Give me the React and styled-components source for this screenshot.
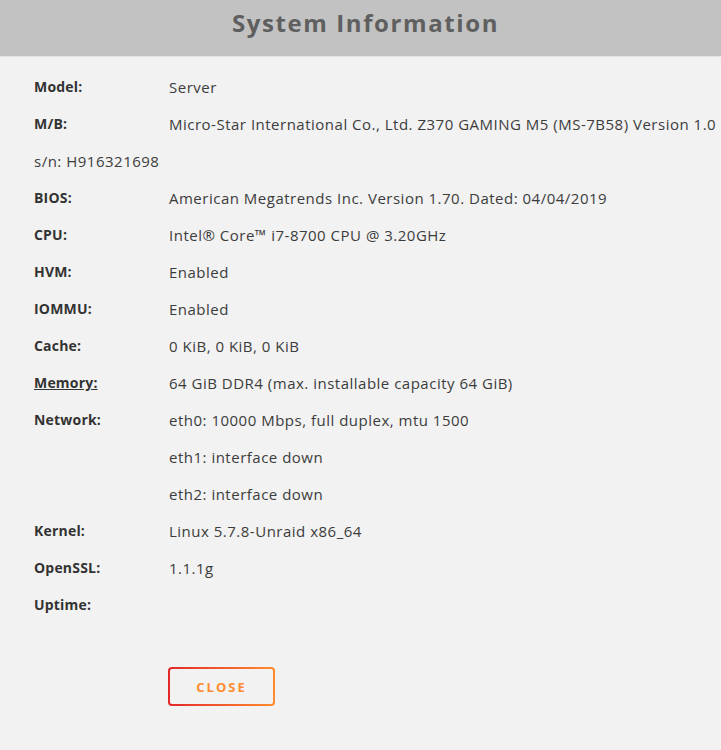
import styled, { createGlobalStyle } from "styled-components";

const GlobalStyle = createGlobalStyle`
  body {
    margin: 0;
    background: #f2f2f2;
    font-family: "Open Sans", "Liberation Sans", sans-serif;
  }
`;

const Page = styled.div`
  width: 721px;
  min-height: 750px;
  background: #f2f2f2;
  overflow: hidden;
`;

const Header = styled.div`
  height: 57px;
  box-sizing: border-box;
  background: #c2c2c2;
  border-bottom: 1px solid #e4e4e4;
  display: flex;
  align-items: center;
  justify-content: center;
  padding: 0 0 12px 10px;
`;

const Title = styled.h1`
  margin: 0;
  font-size: 24px;
  font-weight: 700;
  letter-spacing: 1.6px;
  color: #5f5f5f;
`;

const Body = styled.div`
  padding: 11px 0 0 34px;
`;

const Row = styled.div`
  display: grid;
  grid-template-columns: 135px 1fr;
  align-items: center;
  min-height: 37px;
  color: #333;
  white-space: nowrap;
`;

const Label = styled.span`
  font-size: 14px;
  font-weight: 700;
  letter-spacing: 0.2px;
  text-decoration: ${(p) => (p.$link ? "underline" : "none")};
`;

const Value = styled.span`
  font-size: 15px;
  letter-spacing: 0.5px;
  color: #3c3c3c;
`;

const Plain = styled.div`
  min-height: 37px;
  display: flex;
  align-items: center;
  font-size: 15px;
  letter-spacing: 0.5px;
  color: #3c3c3c;
`;

const Footer = styled.div`
  padding: 44px 0 0 134px;
`;

const CloseButton = styled.button`
  width: 107px;
  height: 39px;
  border: 2px solid transparent;
  border-radius: 4px;
  background:
    linear-gradient(#f2f2f2, #f2f2f2) padding-box,
    linear-gradient(90deg, #e22828, #ff8c2f) border-box;
  color: #ff8c2f;
  font-family: "Open Sans", "Liberation Sans", sans-serif;
  font-size: 13px;
  font-weight: 700;
  letter-spacing: 2px;
  text-transform: uppercase;
  cursor: pointer;
`;

const rows = [
  ["Model:", "Server"],
  ["M/B:", "Micro-Star International Co., Ltd. Z370 GAMING M5 (MS-7B58) Version 1.0"],
];

const rows2 = [
  ["BIOS:", "American Megatrends Inc. Version 1.70. Dated: 04/04/2019"],
  ["CPU:", "Intel® Core™ i7-8700 CPU @ 3.20GHz"],
  ["HVM:", "Enabled"],
  ["IOMMU:", "Enabled"],
  ["Cache:", "0 KiB, 0 KiB, 0 KiB"],
];

const network = [
  "eth0: 10000 Mbps, full duplex, mtu 1500",
  "eth1: interface down",
  "eth2: interface down",
];

const App = () => {
  return (
    <Page>
      <GlobalStyle />
      <Header>
        <Title>System Information</Title>
      </Header>
      <Body>
        {rows.map(([k, v]) => (
          <Row key={k}>
            <Label>{k}</Label>
            <Value>{v}</Value>
          </Row>
        ))}
        <Plain>s/n: H916321698</Plain>
        {rows2.map(([k, v]) => (
          <Row key={k}>
            <Label>{k}</Label>
            <Value>{v}</Value>
          </Row>
        ))}
        <Row>
          <Label $link>Memory:</Label>
          <Value>64 GiB DDR4 (max. installable capacity 64 GiB)</Value>
        </Row>
        {network.map((n, i) => (
          <Row key={n}>
            <Label>{i === 0 ? "Network:" : ""}</Label>
            <Value>{n}</Value>
          </Row>
        ))}
        <Row>
          <Label>Kernel:</Label>
          <Value>Linux 5.7.8-Unraid x86_64</Value>
        </Row>
        <Row>
          <Label>OpenSSL:</Label>
          <Value>1.1.1g</Value>
        </Row>
        <Row>
          <Label>Uptime:</Label>
          <Value></Value>
        </Row>
        <Footer>
          <CloseButton>Close</CloseButton>
        </Footer>
      </Body>
    </Page>
  );
};

export default App;
